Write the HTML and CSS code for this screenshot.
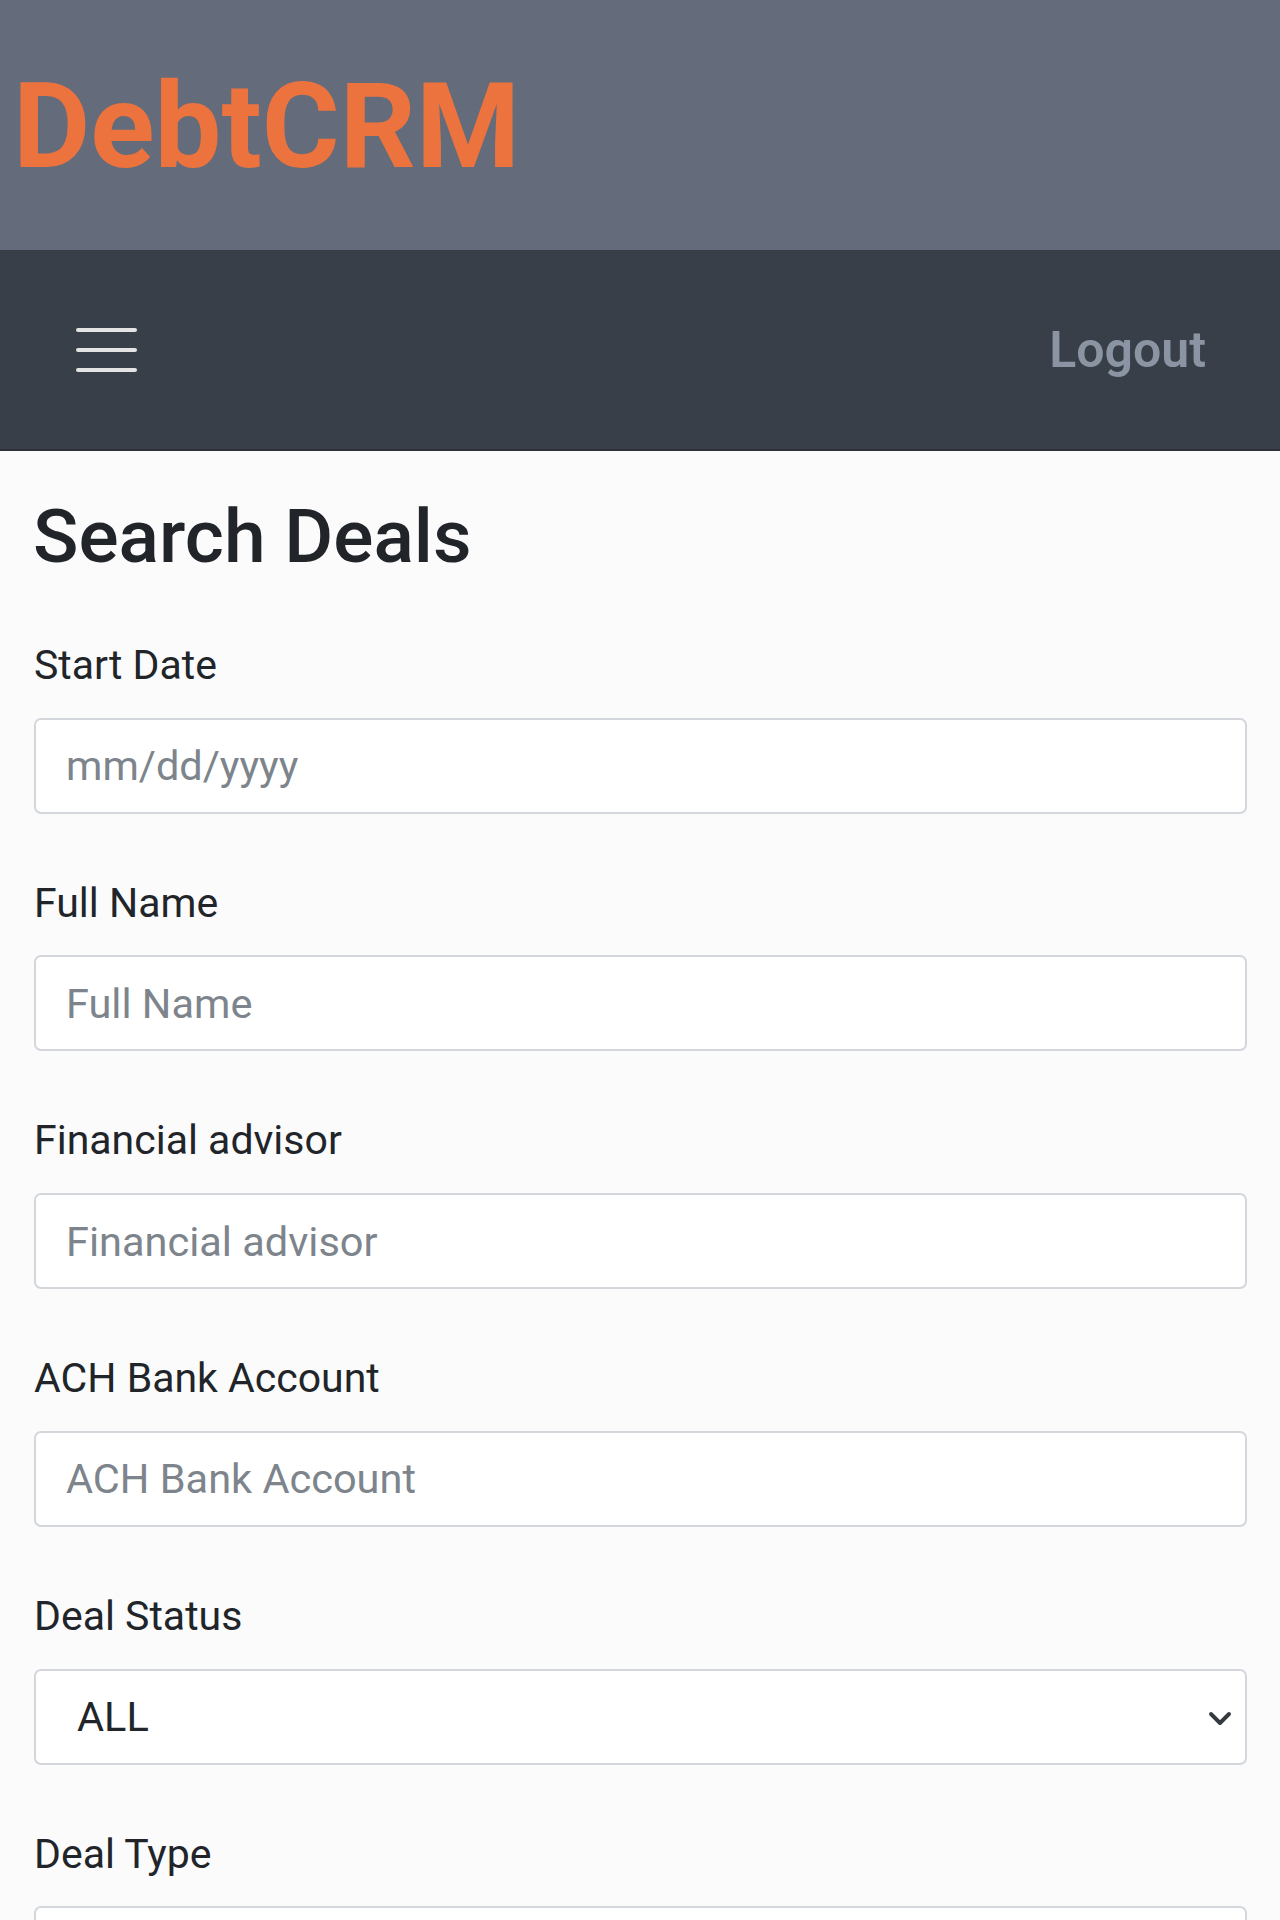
FILE: index.html
```html
<html>
<head>
    <title>DebtCRM - Search Deals</title>
    <link rel="stylesheet" href="styles.css">
</head>
<body>
    <header class="brand-bar">
        <span class="brand">DebtCRM</span>
    </header>
    <nav class="top-nav">
        <button class="menu-toggle" type="button">
            <span></span>
            <span></span>
            <span></span>
        </button>
        <a class="logout" href="#">Logout</a>
    </nav>
    <main class="content">
        <h2>Search Deals</h2>
        <form id="form-search">
            <div class="field">
                <label for="start_date">Start Date</label>
                <input type="text" id="start_date" name="start_date" placeholder="mm/dd/yyyy">
            </div>
            <div class="field">
                <label for="full_name">Full Name</label>
                <input type="text" id="full_name" name="full_name" placeholder="Full Name">
            </div>
            <div class="field">
                <label for="advisor">Financial advisor</label>
                <input type="text" id="advisor" name="advisor" placeholder="Financial advisor">
            </div>
            <div class="field">
                <label for="ach">ACH Bank Account</label>
                <input type="text" id="ach" name="ach" placeholder="ACH Bank Account">
            </div>
            <div class="field">
                <label for="status">Deal Status</label>
                <select id="status" name="status">
                    <option value="">ALL</option>
                    <option value="open">Open</option>
                    <option value="closed">Closed</option>
                </select>
            </div>
            <div class="field">
                <label for="type">Deal Type</label>
                <select id="type" name="type">
                    <option value="">ALL</option>
                </select>
            </div>
        </form>
    </main>
</body>
</html>
```

FILE: styles.css
```css
body {
    margin: 0;
    font-family: Roboto, "Liberation Sans", sans-serif;
    background-color: #fbfbfc;
    color: #212529;
}

.brand-bar {
    height: 250px;
    display: flex;
    align-items: center;
    padding: 4px 0 0 13px;
    box-sizing: border-box;
    background-color: #646b7a;
}

.brand {
    font-size: 119px;
    font-weight: bold;
    line-height: 1.2;
    color: #ec733e;
}

.top-nav {
    height: 199px;
    display: flex;
    align-items: center;
    justify-content: space-between;
    padding: 0 74px 0 76px;
    background-color: #393f48;
    border-bottom: 2px solid #2c3138;
}

.menu-toggle {
    display: flex;
    flex-direction: column;
    gap: 16px;
    padding: 0;
    border: none;
    background: none;
}

.menu-toggle span {
    display: block;
    width: 61px;
    height: 4px;
    border-radius: 2px;
    background-color: #e4e4e4;
}

.logout {
    font-size: 50px;
    font-weight: 600;
    color: #8a94a3;
    text-decoration: none;
}

.content {
    padding: 40px 33px 0 34px;
}

h2 {
    margin: 0 0 53px -1px;
    font-size: 75px;
    font-weight: 500;
    line-height: 1.2;
}

.field {
    margin-bottom: 58px;
}

label {
    display: block;
    margin-bottom: 21px;
    font-size: 41px;
    line-height: 1.53;
}

input, select {
    display: block;
    width: 100%;
    height: 96px;
    box-sizing: border-box;
    padding: 0 30px;
    font-family: inherit;
    font-size: 41.5px;
    color: #212529;
    background-color: #fff;
    border: 2px solid #d3d7dc;
    border-radius: 7px;
}

input::placeholder {
    color: #7d848b;
}

select {
    appearance: none;
    padding-left: 41px;
    background-image: url("data:image/svg+xml,%3csvg xmlns='http://www.w3.org/2000/svg' viewBox='0 0 16 12'%3e%3cpath fill='none' stroke='%23343a40' stroke-linecap='round' stroke-linejoin='round' stroke-width='2.6' d='m2 4 6 6 6-6'/%3e%3c/svg%3e");
    background-repeat: no-repeat;
    background-position: right 13px center;
    background-size: 24px 18px;
}
```
